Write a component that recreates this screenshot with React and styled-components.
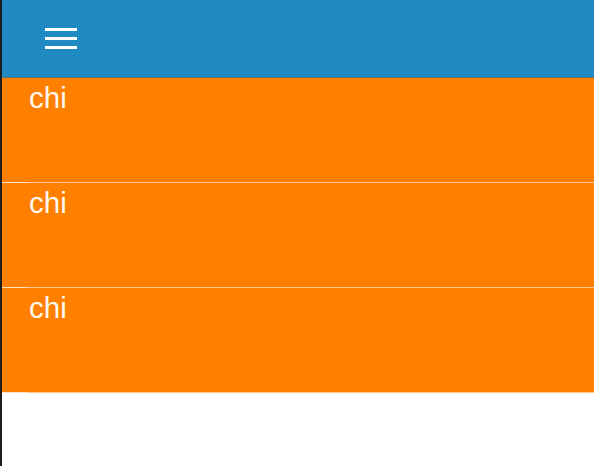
import React from "react";
import styled, { createGlobalStyle } from "styled-components";

const Global = createGlobalStyle`
  html, body { margin: 0; padding: 0; background: #ffffff; }
  body { font-family: "Liberation Sans", Arial, sans-serif; }
`;

const Screen = styled.div`
  display: flex;
  flex-direction: column;
  width: 594px;
  height: 466px;
  box-sizing: border-box;
  border-left: 2px solid #1c1c1c;
  background: #ffffff;
  overflow: hidden;
`;

const NavBar = styled.header`
  display: flex;
  align-items: center;
  height: 77px;
  padding-left: 43px;
  background: #1f8ac2;
  border-bottom: 1px solid #6b7560;
  flex-shrink: 0;
`;

const MenuButton = styled.button`
  display: flex;
  flex-direction: column;
  gap: 6px;
  padding: 0;
  margin-top: -1px;
  border: none;
  background: transparent;
  cursor: pointer;
`;

const MenuLine = styled.span`
  display: block;
  width: 32px;
  height: 3px;
  background: #ffffff;
`;

const List = styled.div`
  display: flex;
  flex-direction: column;
`;

const Row = styled.div`
  display: flex;
  flex-direction: column;
  background: #ff8000;
`;

const RowBody = styled.div`
  height: 100px;
  padding: 4px 0 0 27px;
  font-size: 29.5px;
  line-height: 32px;
  color: #fff8ef;
  box-sizing: content-box;
`;

const Separator = styled.div`
  display: flex;
  height: 1px;
`;

const SeparatorInset = styled.span`
  width: 26px;
  background: #ffe2c2;
`;

const SeparatorRest = styled.span`
  flex: 1;
  background: #ffc58a;
`;

const items = ["chi", "chi", "chi"];

export default function App() {
  return (
    <>
      <Global />
      <Screen>
        <NavBar>
          <MenuButton aria-label="menu">
            <MenuLine />
            <MenuLine />
            <MenuLine />
          </MenuButton>
        </NavBar>
        <List>
          {items.map((t, i) => (
            <Row key={i}>
              <RowBody>{t}</RowBody>
              <Separator>
                <SeparatorInset />
                <SeparatorRest />
              </Separator>
            </Row>
          ))}
        </List>
      </Screen>
    </>
  );
}
